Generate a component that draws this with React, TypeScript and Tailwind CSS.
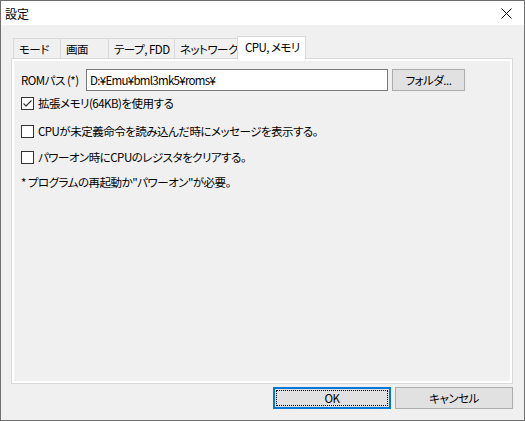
import React from 'react';

const TABS = [
  { label: 'モード', w: 'w-[48px]' },
  { label: '画面', w: 'w-[49px]' },
  { label: 'テープ, FDD', w: 'w-[67px]' },
  { label: 'ネットワーク', w: 'w-[64px]' },
];

const CheckRow: React.FC<{ checked?: boolean; label: string; className?: string }> = ({ checked, label, className }) => (
  <div className={`flex items-center h-[16px] ${className ?? ''}`}>
    <div className="w-[13px] h-[13px] border border-[#333333] bg-white flex-shrink-0">
      {checked && (
        <svg width="11" height="11" viewBox="0 0 11 11" fill="none" stroke="#333333" strokeWidth="1.2">
          <polyline points="1.5,5.5 4,8 9.5,2.5" />
        </svg>
      )}
    </div>
    <span className="ml-[4px]">{label}</span>
  </div>
);

export default function App() {
  return (
    <div className="w-[525px] h-[421px] border border-[#6f6f6f] bg-[#f0f0f0] flex flex-col text-[11.5px] leading-[16px] text-black whitespace-nowrap font-['Noto_Sans_CJK_JP',sans-serif] [font-feature-settings:'palt'] tracking-[-0.5px]">
      {/* title bar */}
      <div className="h-[24px] bg-white flex items-center justify-between pl-[4px] pr-[12px]">
        <span className="pt-[2px] text-[12px] tracking-normal">設定</span>
        <svg width="11" height="11" viewBox="0 0 11 11" stroke="#000" strokeWidth="1" className="mt-[1px]">
          <line x1="0.5" y1="0.5" x2="10.5" y2="10.5" />
          <line x1="10.5" y1="0.5" x2="0.5" y2="10.5" />
        </svg>
      </div>

      {/* tabs */}
      <div className="ml-[12px] mt-[11px] h-[22px] flex items-end">
        {TABS.map((t, i) => (
          <div
            key={t.label}
            className={`${t.w} h-[20px] border border-b-0 border-[#d9d9d9] bg-[#f0f0f0] flex items-center pl-[5px] overflow-hidden ${i > 0 ? '-ml-px' : ''}`}
          >
            {t.label}
          </div>
        ))}
        <div className="w-[69px] h-[23px] -mb-px -ml-px relative z-10 border border-b-0 border-[#d9d9d9] bg-white flex items-center pl-[7px] pb-[2px]">
          CPU, メモリ
        </div>
      </div>

      {/* panel */}
      <div className="ml-[10px] w-[502px] h-[326px] border border-[#d9d9d9] bg-white p-[2px]">
        <div className="h-full bg-[#f0f0f0] pl-[7px] pt-[8px] flex flex-col">
          <div className="flex items-center h-[22px]">
            <span className="w-[65px]">ROMパス (*)</span>
            <div className="w-[302px] h-[22px] border border-[#7a7a7a] bg-white flex items-center pl-[3px] tracking-[-0.7px]">
              D:¥Emu¥bml3mk5¥roms¥
            </div>
            <button className="ml-[4px] w-[73px] h-[22px] border border-[#adadad] bg-[#e1e1e1] flex items-center justify-center">
              フォルダ...
            </button>
          </div>
          <CheckRow checked label="拡張メモリ(64KB)を使用する" className="mt-[4px]" />
          <CheckRow label="CPUが未定義命令を読み込んだ時にメッセージを表示する。" className="mt-[12px]" />
          <CheckRow label="パワーオン時にCPUのレジスタをクリアする。" className="mt-[10px]" />
          <div className="mt-[9px] h-[16px] flex items-center">* プログラムの再起動か"パワーオン"が必要。</div>
        </div>
      </div>

      {/* buttons */}
      <div className="ml-[10px] w-[502px] mt-[3px] flex justify-end">
        <button className="w-[118px] h-[22px] border-2 border-[#0078d7] bg-[#e1e1e1] p-px">
          <div className="w-full h-full border border-dotted border-black flex items-center justify-center">OK</div>
        </button>
        <button className="ml-[4px] w-[118px] h-[22px] border border-[#adadad] bg-[#e1e1e1] flex items-center justify-center">
          キャンセル
        </button>
      </div>
    </div>
  );
}
